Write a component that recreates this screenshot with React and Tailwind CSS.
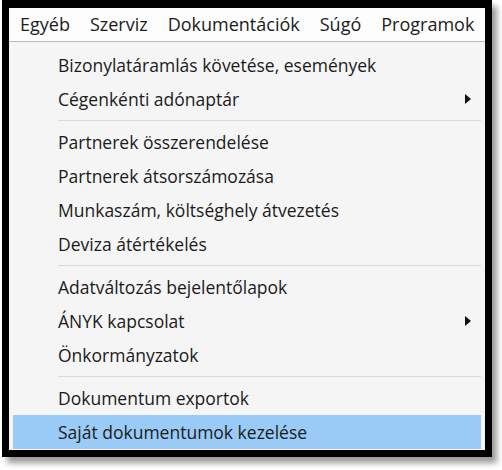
const bar = ["Egyéb", "Szerviz", "Dokumentációk", "Súgó", "Programok"];

const groups = [
  [
    { label: "Bizonylatáramlás követése, események" },
    { label: "Cégenkénti adónaptár", sub: true },
  ],
  [
    { label: "Partnerek összerendelése" },
    { label: "Partnerek átsorszámozása" },
    { label: "Munkaszám, költséghely átvezetés" },
    { label: "Deviza átértékelés" },
  ],
  [
    { label: "Adatváltozás bejelentőlapok" },
    { label: "ÁNYK kapcsolat", sub: true },
    { label: "Önkormányzatok" },
  ],
  [
    { label: "Dokumentum exportok" },
    { label: "Saját dokumentumok kezelése", active: true },
  ],
];

const Arrow = () => (
  <svg width="6" height="10" viewBox="0 0 6 10" className="mr-[10px]">
    <path d="M0 0 L6 5 L0 10 Z" fill="#111" />
  </svg>
);

const Item = ({ label, sub, active }) => (
  <div
    className={`flex h-[34px] items-center justify-between pl-[45px] ${
      active ? "bg-[#99cbf6]" : ""
    }`}
  >
    <span>{label}</span>
    {sub && <Arrow />}
  </div>
);

export default function App() {
  return (
    <div className="h-[470px] w-[502px] bg-white pl-[2px]">
      <div
        className="h-[457px] w-[490px] overflow-hidden border-[7px] border-t-[8px] border-black bg-[#f5f5f5] text-[17.5px] text-[#1b1b1b] shadow-[5px_6px_6px_rgba(0,0,0,0.4)]"
        style={{ fontFamily: '"Open Sans", sans-serif' }}
      >
        <div className="flex h-[34px] items-center gap-[20px] border-b border-[#b9b9b9] bg-[#fdfdfd] pl-[11px] text-[18px] whitespace-nowrap">
          {bar.map((b) => (
            <span key={b}>{b}</span>
          ))}
        </div>
        <div className="px-[4px] pt-[6px]">
          {groups.map((g, i) => (
            <div key={i}>
              {i > 0 && (
                <div className="flex h-[9px] items-center pl-[45px]">
                  <div className="h-px w-full bg-[#d9d9d9]" />
                </div>
              )}
              {g.map((it) => (
                <Item key={it.label} {...it} />
              ))}
            </div>
          ))}
        </div>
      </div>
    </div>
  );
}
